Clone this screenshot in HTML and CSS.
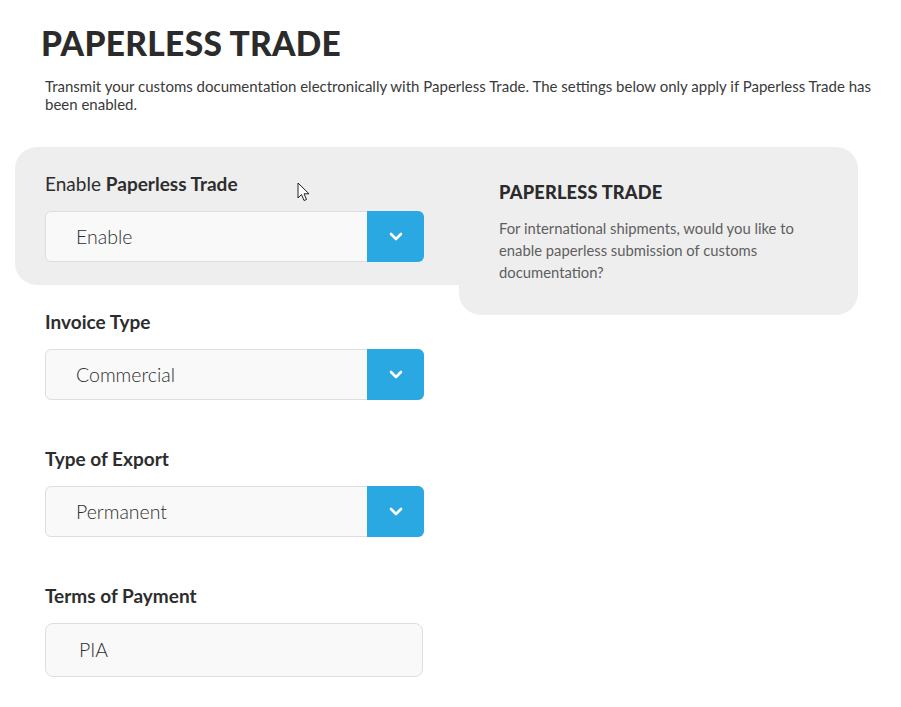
FILE: index.html
```html
<!DOCTYPE html>
<html lang="en">
<head>
<meta charset="utf-8">
<title>Paperless Trade</title>
<link rel="stylesheet" href="styles.css">
</head>
<body>
<main class="page">
  <header class="intro">
    <h1 class="title">PAPERLESS TRADE</h1>
    <p class="lead">Transmit your customs documentation electronically with Paperless Trade. The settings below only apply if Paperless Trade has been enabled.</p>
  </header>

  <section class="feature">
    <div class="feature-field">
      <label class="label">Enable <strong>Paperless Trade</strong></label>
      <div class="select">
        <span class="select-value">Enable</span>
        <span class="select-btn"><svg width="14" height="9" viewBox="0 0 14 9"><path d="M2 2 L7 7 L12 2" fill="none" stroke="#fff" stroke-width="2.6" stroke-linecap="round" stroke-linejoin="round"/></svg></span>
      </div>
    </div>
    <aside class="tip">
      <h2 class="tip-title">PAPERLESS TRADE</h2>
      <p class="tip-text">For international shipments, would you like to enable paperless submission of customs documentation?</p>
    </aside>
    <svg class="cursor" width="13" height="21" viewBox="0 0 13 21"><path d="M1 1 L1 16 L4.5 12.5 L7 18.5 L9.5 17.5 L7 11.8 L12 11.8 Z" fill="#fff" stroke="#222" stroke-width="1" stroke-linejoin="round"/></svg>
  </section>

  <div class="fields">
    <div class="field">
      <label class="label label-bold">Invoice Type</label>
      <div class="select">
        <span class="select-value">Commercial</span>
        <span class="select-btn"><svg width="14" height="9" viewBox="0 0 14 9"><path d="M2 2 L7 7 L12 2" fill="none" stroke="#fff" stroke-width="2.6" stroke-linecap="round" stroke-linejoin="round"/></svg></span>
      </div>
    </div>
    <div class="field">
      <label class="label label-bold">Type of Export</label>
      <div class="select">
        <span class="select-value">Permanent</span>
        <span class="select-btn"><svg width="14" height="9" viewBox="0 0 14 9"><path d="M2 2 L7 7 L12 2" fill="none" stroke="#fff" stroke-width="2.6" stroke-linecap="round" stroke-linejoin="round"/></svg></span>
      </div>
    </div>
    <div class="field">
      <label class="label label-bold">Terms of Payment</label>
      <div class="input">PIA</div>
    </div>
  </div>
</main>
</body>
</html>
```

FILE: styles.css
```css
* { box-sizing: border-box; }
html, body { margin: 0; padding: 0; background: #fff; }
body {
  font-family: "Lato", "Open Sans", sans-serif;
  color: #2d2d2d;
}
.page { width: 901px; padding-top: 22px; }

.intro { padding: 0 20px 0 45px; }
.title {
  margin: 0 0 0 -4px;
  font-size: 33.5px;
  line-height: 42px;
  font-weight: 900;
  letter-spacing: 0.3px;
  color: #2b2b2b;
}
.lead {
  margin: 13px 0 0;
  font-size: 15px;
  line-height: 18px;
  color: #3a3a3a;
}

.feature {
  position: relative;
  margin: 34px 0 0 15px;
  display: grid;
  grid-template-columns: 444px 399px;
  align-items: start;
}
.feature-field {
  background: #eeeeee;
  border-radius: 22px 0 0 22px;
  height: 138px;
  padding: 26px 35px 0 30px;
}
.tip {
  background: #eeeeee;
  border-radius: 0 22px 22px 22px;
  height: 168px;
  margin-bottom: -30px;
  padding: 34px 40px 0 40px;
}
.tip-title {
  margin: 0;
  font-size: 18.2px;
  line-height: 22px;
  font-weight: 900;
  color: #2b2b2b;
  letter-spacing: 0.2px;
}
.tip-text {
  margin: 14px 0 0;
  font-size: 14.8px;
  line-height: 22px;
  color: #5e5e5e;
  font-weight: 400;
}
.cursor { position: absolute; left: 282px; top: 35px; }

.label {
  display: block;
  font-size: 19px;
  line-height: 22px;
  color: #2d2d2d;
  margin-bottom: 16px;
}
.label strong, .label-bold { font-weight: 700; }

.select {
  display: flex;
  height: 51px;
  width: 379px;
  background: #f9f9f9;
  border: 1px solid #dedede;
  border-radius: 6px;
}
.select-value {
  flex: 1;
  padding-left: 30px;
  font-size: 19.5px;
  font-weight: 300;
  line-height: 49px;
  color: #2f2f2f;
}
.select-btn {
  width: 57px;
  margin: -1px -1px -1px 0;
  background: #29a8e1;
  border-radius: 0 6px 6px 0;
  display: flex;
  align-items: center;
  justify-content: center;
}

.fields {
  padding-left: 45px;
  margin-top: 26px;
  display: flex;
  flex-direction: column;
  gap: 48px;
}
.input {
  height: 54px;
  width: 378px;
  background: #f9f9f9;
  border: 1px solid #dedede;
  border-radius: 8px;
  padding-left: 33px;
  font-size: 19.5px;
  font-weight: 300;
  line-height: 52px;
  color: #2f2f2f;
}
```
